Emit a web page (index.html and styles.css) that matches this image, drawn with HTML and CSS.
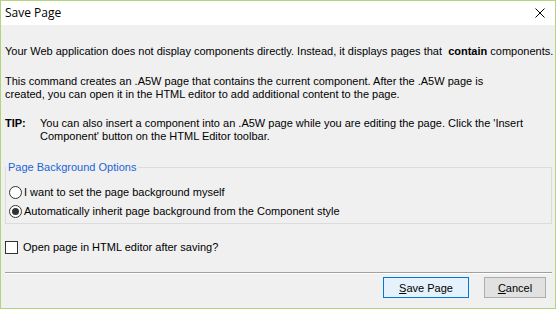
FILE: index.html
```html
<!DOCTYPE html>
<html>
<head>
<meta charset="utf-8">
<link rel="stylesheet" href="styles.css">
</head>
<body>
<div class="window">
  <div class="titlebar">
    <span class="title">Save Page</span>
    <svg class="close" width="10" height="10" viewBox="0 0 10 10"><path d="M0.5 0.5 L9.5 9.5 M9.5 0.5 L0.5 9.5" stroke="#000" stroke-width="1" fill="none"/></svg>
  </div>
  <div class="content">
    <p class="para p1">Your Web application does not display components directly. Instead, it displays pages that&nbsp; <b>contain</b> components.</p>
    <p class="para p2">This command creates an .A5W page that contains the current component. After the .A5W page is<br>created, you can open it in the HTML editor to add additional content to the page.</p>
    <div class="tip">
      <span class="tip-label">TIP:</span>
      <span class="tip-text">You can also insert a component into an .A5W page while you are editing the page. Click the 'Insert<br>Component' button on the HTML Editor toolbar.</span>
    </div>
    <fieldset class="group">
      <legend class="group-title">Page Background Options</legend>
      <div class="opt"><span class="radio"></span><span>I want to set the page background myself</span></div>
      <div class="opt"><span class="radio checked"></span><span>Automatically inherit page background from the Component style</span></div>
    </fieldset>
    <div class="check-row"><span class="checkbox"></span><span>Open page in HTML editor after saving?</span></div>
    <div class="sep"></div>
    <div class="buttons">
      <button class="btn btn-default"><u>S</u>ave Page</button>
      <button class="btn btn-cancel"><u>C</u>ancel</button>
    </div>
  </div>
</div>
</body>
</html>
```
FILE: styles.css
```css
html, body {
  margin: 0;
  padding: 0;
  background: #f0f0f0;
}
.window {
  width: 556px;
  height: 309px;
  box-sizing: border-box;
  border: 1px solid #b5d27f;
  background: #f0f0f0;
  font-family: "Liberation Sans", Arial, sans-serif;
  font-size: 11px;
  line-height: 13px;
  color: #000;
  overflow: hidden;
}
.titlebar {
  height: 24px;
  background: #fff;
  display: flex;
  align-items: center;
  padding-left: 4px;
}
.title {
  font-family: "Open Sans", "Noto Sans", sans-serif;
  font-size: 12px;
  line-height: 16px;
}
.close {
  margin-left: auto;
  margin-right: 10px;
  margin-top: -1px;
  display: block;
}
.content {
  padding: 20px 3px 0 4px;
}
.para {
  margin: 0;
  white-space: nowrap;
}
.p2 {
  margin-top: 17px;
}
.tip {
  margin-top: 16px;
  display: flex;
  white-space: nowrap;
}
.tip-label {
  width: 35px;
  font-weight: bold;
  flex: none;
}
.group {
  margin: 18px 0 0 0;
  padding: 9px 0 2px 3px;
  border: 1px solid #dcdcdc;
  min-width: 0;
}
.group-title {
  color: #1c64d6;
  padding: 0 2px;
  margin-left: -3px;
  line-height: 13px;
}
.opt {
  height: 19px;
  display: flex;
  align-items: center;
}
.radio {
  width: 13px;
  height: 13px;
  box-sizing: border-box;
  border: 1px solid #333;
  border-radius: 50%;
  background: #fff;
  margin-right: 2px;
  display: flex;
  align-items: center;
  justify-content: center;
  flex: none;
}
.radio.checked::after {
  content: "";
  width: 7px;
  height: 7px;
  border-radius: 50%;
  background: #333;
}
.check-row {
  margin-top: 14px;
  height: 19px;
  display: flex;
  align-items: center;
}
.checkbox {
  width: 13px;
  height: 13px;
  box-sizing: border-box;
  border: 1px solid #333;
  background: #fff;
  margin-right: 5px;
  flex: none;
}
.sep {
  margin-top: 15px;
  height: 1px;
  border-top: 1px solid #a0a0a0;
  border-bottom: 1px solid #fff;
  height: 0;
}
.buttons {
  margin-top: 3px;
  display: flex;
  justify-content: flex-end;
  gap: 15px;
  padding-right: 6px;
}
.btn {
  height: 21px;
  box-sizing: border-box;
  font-family: inherit;
  font-size: 11px;
  color: #000;
  padding: 0;
  margin: 0;
  border-radius: 0;
}
.btn-default {
  width: 86px;
  background: #e5f1fb;
  border: 1px solid #0078d7;
}
.btn-cancel {
  width: 62px;
  background: #e1e1e1;
  border: 1px solid #adadad;
}
```
